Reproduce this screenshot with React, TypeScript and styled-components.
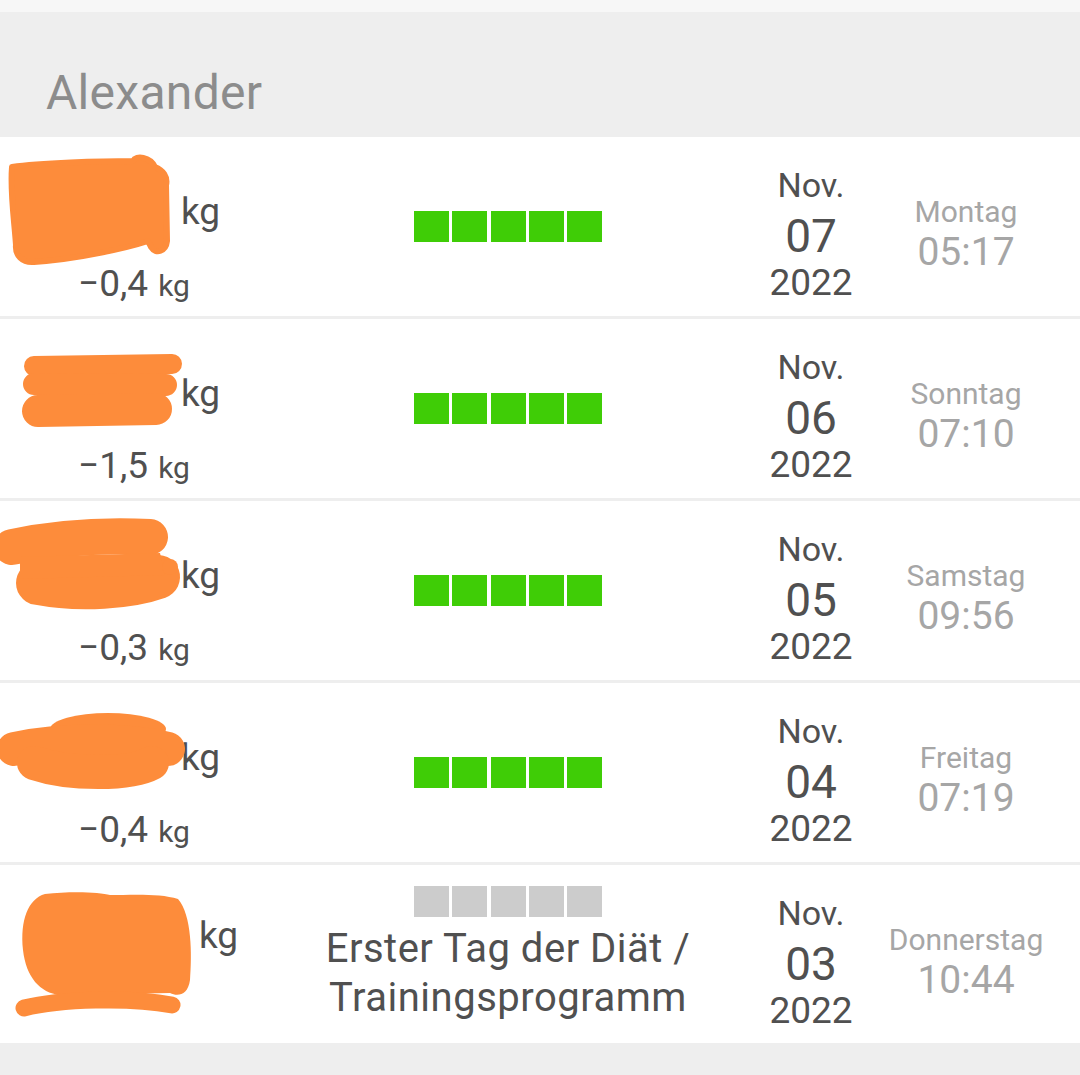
import React from "react";
import styled, { createGlobalStyle } from "styled-components";

const Global = createGlobalStyle`
  html, body { margin: 0; padding: 0; background: #eeeeee; }
  body { font-family: Roboto, "Noto Sans", "Liberation Sans", sans-serif; }
`;

const Page = styled.div`
  width: 1080px;
  min-height: 1075px;
  background: #eeeeee;
  display: flex;
  flex-direction: column;
`;

const TopStrip = styled.div`
  height: 12px;
  background: #f7f7f7;
`;

const Header = styled.div`
  height: 125px;
  box-sizing: border-box;
  padding: 53px 0 0 46px;
  font-size: 48px;
  line-height: 56px;
  letter-spacing: 0.3px;
  color: #8c8c8c;
`;

const List = styled.div`
  display: flex;
  flex-direction: column;
  gap: 3px;
`;

const Row = styled.div<{ $h: number }>`
  height: ${(p) => p.$h}px;
  background: #ffffff;
  display: grid;
  grid-template-columns: 276px 464px 142px 168px 1fr;
`;

const WeightCell = styled.div<{ $pt: number }>`
  position: relative;
  display: flex;
  flex-direction: column;
  align-items: center;
  padding-top: ${(p) => p.$pt}px;
  color: #505050;
`;

const WeightLine = styled.div`
  display: flex;
  align-items: baseline;
  gap: 9px;
  font-size: 37px;
  line-height: 60px;
  white-space: nowrap;
`;

const HiddenValue = styled.span<{ $w: number }>`
  display: inline-block;
  width: ${(p) => p.$w}px;
  height: 40px;
`;

const DiffLine = styled.div`
  display: flex;
  align-items: baseline;
  gap: 10px;
  margin-top: 20px;
  margin-left: -8px;
  font-size: 37px;
  line-height: 44px;
  white-space: nowrap;
`;

const SmallUnit = styled.span`
  font-size: 30px;
`;

const Scribble = styled.svg`
  position: absolute;
  left: 0;
  top: 0;
  width: 276px;
  height: 179px;
  overflow: visible;
  pointer-events: none;
`;

const StatusCell = styled.div`
  display: flex;
  flex-direction: column;
  align-items: center;
  justify-content: center;
  color: #505050;
`;

const Blocks = styled.div`
  display: flex;
  gap: 3.25px;
`;

const Block = styled.span<{ $on: boolean }>`
  width: 35px;
  height: 31px;
  background: ${(p) => (p.$on ? "#3fcd06" : "#cccccc")};
`;

const Note = styled.div`
  margin-top: 7px;
  font-size: 40px;
  line-height: 49px;
  letter-spacing: 0.5px;
  text-align: center;
  max-width: 420px;
`;

const DateCell = styled.div`
  display: flex;
  flex-direction: column;
  align-items: center;
  padding-top: 26px;
  color: #505050;
  white-space: nowrap;
`;

const Month = styled.div`
  font-size: 34px;
  line-height: 44px;
`;

const DayNum = styled.div`
  font-size: 46px;
  line-height: 58px;
`;

const Year = styled.div`
  font-size: 37px;
  line-height: 36px;
`;

const TimeCell = styled.div`
  display: flex;
  flex-direction: column;
  align-items: center;
  padding-top: 55px;
  color: #a6a6a6;
  white-space: nowrap;
`;

const Weekday = styled.div`
  font-size: 30px;
  line-height: 40px;
`;

const Clock = styled.div`
  font-size: 39px;
  line-height: 41px;
`;

const ORANGE = "#fd8c3b";

const scribbles: React.ReactNode[] = [
  <path
    key="a"
    fill={ORANGE}
    stroke={ORANGE}
    strokeWidth={6}
    strokeLinejoin="round"
    d="M12 30 C40 26 100 24 133 24 C136 18 150 20 155 30 C163 33 168 40 166 48 L167 104 C166 114 156 118 151 110 L148 104 C130 110 80 122 34 125 C22 126 15 118 16 108 C14 80 10 55 12 30 Z"
  />,
  <g key="b" fill="none" stroke={ORANGE} strokeLinecap="round">
    <path d="M34 47 L172 45" strokeWidth={20} />
    <path d="M34 65 L166 66" strokeWidth={22} />
    <path d="M38 92 L156 90" strokeWidth={32} />
  </g>,
  <g key="c" fill="none" stroke={ORANGE} strokeLinecap="round">
    <path d="M12 46 C60 36 110 34 150 36" strokeWidth={36} />
    <path d="M38 82 C80 90 130 86 158 76" strokeWidth={44} />
    <path d="M20 56 L160 52 L165 74 L20 78 Z" fill={ORANGE} stroke="none" />
    <circle cx={170} cy={66} r={8} fill={ORANGE} stroke="none" />
  </g>,
  <g key="d" fill="none" stroke={ORANGE} strokeLinecap="round">
    <ellipse cx={108} cy={46} rx={58} ry={16} fill={ORANGE} stroke="none" />
    <path d="M14 66 C60 56 130 56 168 66" strokeWidth={34} />
    <path d="M34 80 C70 92 130 92 152 80" strokeWidth={34} />
  </g>,
  <g key="e">
    <path
      fill={ORANGE}
      d="M45 29 C70 26 100 27 110 30 C130 30 160 28 178 34 C192 50 192 90 190 115 C188 130 178 132 170 128 L60 130 C40 128 26 112 23 85 C20 55 28 34 45 29 Z"
    />
    <path
      d="M24 143 C60 134 130 132 172 140"
      fill="none"
      stroke={ORANGE}
      strokeWidth={17}
      strokeLinecap="round"
    />
  </g>,
];

type Entry = {
  diff?: string;
  note?: string;
  good: boolean;
  month: string;
  day: string;
  year: string;
  weekday: string;
  time: string;
  valueWidth: number;
};

const entries: Entry[] = [
  { diff: "−0,4", good: true, month: "Nov.", day: "07", year: "2022", weekday: "Montag", time: "05:17", valueWidth: 116 },
  { diff: "−1,5", good: true, month: "Nov.", day: "06", year: "2022", weekday: "Sonntag", time: "07:10", valueWidth: 116 },
  { diff: "−0,3", good: true, month: "Nov.", day: "05", year: "2022", weekday: "Samstag", time: "09:56", valueWidth: 116 },
  { diff: "−0,4", good: true, month: "Nov.", day: "04", year: "2022", weekday: "Freitag", time: "07:19", valueWidth: 116 },
  {
    note: "Erster Tag der Diät / Trainingsprogramm",
    good: false,
    month: "Nov.",
    day: "03",
    year: "2022",
    weekday: "Donnerstag",
    time: "10:44",
    valueWidth: 152,
  },
];

export default function App() {
  return (
    <>
      <Global />
      <Page>
        <TopStrip />
        <Header>Alexander</Header>
        <List>
          {entries.map((e, i) => {
            const last = i === entries.length - 1;
            return (
              <Row key={i} $h={last ? 178 : 179}>
                <WeightCell $pt={e.diff ? 45 : 41}>
                  <WeightLine>
                    <HiddenValue $w={e.valueWidth} aria-hidden="true" />
                    <span>kg</span>
                  </WeightLine>
                  {e.diff && (
                    <DiffLine>
                      <span>{e.diff}</span>
                      <SmallUnit>kg</SmallUnit>
                    </DiffLine>
                  )}
                  <Scribble viewBox="0 0 276 179">{scribbles[i]}</Scribble>
                </WeightCell>
                <StatusCell>
                  <Blocks>
                    {[0, 1, 2, 3, 4].map((b) => (
                      <Block key={b} $on={e.good} />
                    ))}
                  </Blocks>
                  {e.note && <Note>{e.note}</Note>}
                </StatusCell>
                <DateCell>
                  <Month>{e.month}</Month>
                  <DayNum>{e.day}</DayNum>
                  <Year>{e.year}</Year>
                </DateCell>
                <TimeCell>
                  <Weekday>{e.weekday}</Weekday>
                  <Clock>{e.time}</Clock>
                </TimeCell>
              </Row>
            );
          })}
        </List>
      </Page>
    </>
  );
}
